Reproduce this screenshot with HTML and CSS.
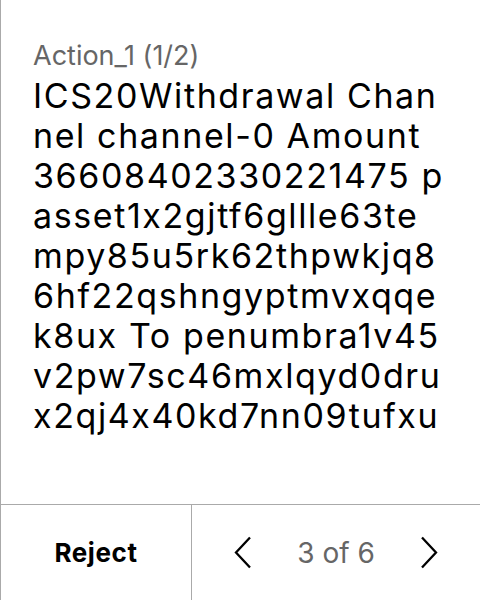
FILE: index.html
```html
<!DOCTYPE html>
<html>
<head>
<meta charset="utf-8">
<link rel="stylesheet" href="styles.css">
</head>
<body>
<div class="screen">
  <div class="content">
    <div class="label">Action_1 (1/2)</div>
    <div class="value">ICS20Withdrawal Channel channel-0 Amount 36608402330221475 passet1x2gjtf6gllle63tempy85u5rk62thpwkjq86hf22qshngyptmvxqqek8ux To penumbra1v45v2pw7sc46mxlqyd0drux2qj4x40kd7nn09tufxu</div>
  </div>
  <div class="footer">
    <div class="reject">Reject</div>
    <div class="pager">
      <svg class="chev" width="18" height="33" viewBox="0 0 18 33"><path d="M16 1.5 L2 16.5 L16 31.5" fill="none" stroke="#000" stroke-width="2.3"/></svg>
      <span class="count">3 of 6</span>
      <svg class="chev" width="18" height="33" viewBox="0 0 18 33"><path d="M2 1.5 L16 16.5 L2 31.5" fill="none" stroke="#000" stroke-width="2.3"/></svg>
    </div>
  </div>
</div>
</body>
</html>
```

FILE: styles.css
```css
html, body {
  margin: 0;
  padding: 0;
  background: #fff;
}
.screen {
  width: 480px;
  height: 600px;
  box-sizing: border-box;
  border-left: 1px solid #aaa;
  display: flex;
  flex-direction: column;
  font-family: Inter, "Noto Sans", sans-serif;
  font-feature-settings: "calt" 0;
}
.content {
  flex: 1;
  padding: 38px 32px 0 32px;
}
.label {
  color: #666;
  font-size: 27px;
  line-height: 36px;
}
.value {
  color: #000;
  font-size: 34px;
  line-height: 40px;
  letter-spacing: 1.6px;
  word-break: break-all;
  margin-top: 2px;
}
.footer {
  height: 96px;
  box-sizing: border-box;
  border-top: 1px solid #aaa;
  display: grid;
  grid-template-columns: 191px 1fr;
}
.reject {
  border-right: 1px solid #aaa;
  display: flex;
  align-items: center;
  justify-content: center;
  font-weight: 700;
  font-size: 26px;
  letter-spacing: 0.6px;
  color: #000;
}
.pager {
  display: flex;
  align-items: center;
  justify-content: center;
  gap: 45px;
}
.count {
  color: #666;
  font-size: 28px;
}
```
